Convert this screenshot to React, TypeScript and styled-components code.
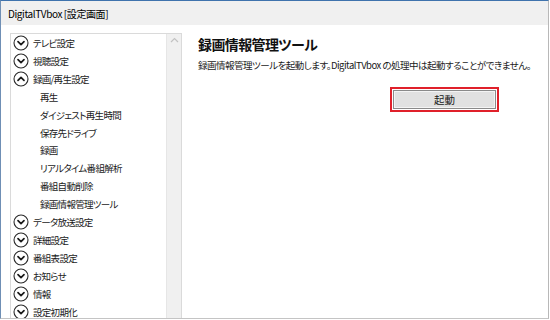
import React from 'react';
import styled, { createGlobalStyle } from 'styled-components';

const GlobalStyle = createGlobalStyle`
  html, body {
    margin: 0;
    padding: 0;
    background: #ffffff;
  }

  body {
    font-family: "Noto Sans CJK JP", "Noto Sans", sans-serif;
    font-feature-settings: "palt";
    color: #1a1a1a;
  }
`;

const Window = styled.div`
  display: flex;
  flex-direction: column;
  width: 549px;
  height: 319px;
  box-sizing: border-box;
  border-top: 1px solid #3f73ad;
  border-left: 1px solid #6f8fb5;
  border-right: 1px solid #b8b8b8;
  border-bottom: 1px solid #c4c4c4;
  overflow: hidden;
  background: #ffffff;
`;

const TitleBar = styled.div`
  display: flex;
  align-items: center;
  height: 24px;
  flex-shrink: 0;
  padding-left: 7px;
  background: #f0f0f0;
  font-size: 10px;
  letter-spacing: -0.4px;
  color: #000000;
`;

const Body = styled.div`
  display: flex;
  flex: 1;
  min-height: 0;
  padding: 8px 0 0 9px;
`;

const Sidebar = styled.div`
  display: flex;
  width: 172px;
  flex-shrink: 0;
  border: 1px solid #dadada;
  border-bottom: none;
  box-sizing: border-box;
`;

const NavList = styled.ul`
  flex: 1;
  list-style: none;
  margin: 0;
  padding: 0;
`;

const NavItem = styled.li<{ $sub?: boolean }>`
  display: flex;
  align-items: center;
  gap: 4px;
  height: 17.93px;
  padding-left: ${({ $sub }) => ($sub ? '29px' : '2px')};
  font-size: 9.5px;
  letter-spacing: -0.7px;
  white-space: nowrap;
`;

const Scrollbar = styled.div`
  display: flex;
  justify-content: center;
  width: 14px;
  padding-top: 3px;
  background: #f0f0f0;
  border-left: 1px solid #e6e6e6;
`;

const Main = styled.div`
  display: flex;
  flex: 1;
  flex-direction: column;
  padding: 2px 0 0 16px;
`;

const Heading = styled.h1`
  margin: 0;
  font-size: 14px;
  font-weight: 700;
  line-height: 18px;
  letter-spacing: -0.6px;
  color: #111111;
`;

const Description = styled.p`
  margin: 5px 0 0;
  font-size: 9.5px;
  line-height: 14px;
  letter-spacing: -0.5px;
  white-space: nowrap;
`;

const ButtonRow = styled.div`
  display: flex;
  justify-content: flex-end;
  margin: 15px 0 0;
  width: 301px;
`;

const Highlight = styled.div`
  padding: 1px;
  border: 2px solid #e0202a;
`;

const Button = styled.button`
  display: block;
  width: 103px;
  height: 19px;
  padding: 0;
  border: 1px solid #8a8a8a;
  box-shadow: inset 0 0 0 1px #f4f4f4;
  background: #e1e1e1;
  font-family: inherit;
  font-size: 10.5px;
  color: #1a1a1a;
`;

const Toggle = ({ open }: { open?: boolean }) => (
  <svg width="16" height="16" viewBox="0 0 16 16">
    <circle cx="8" cy="8" r="7" fill="none" stroke="#2a2a2a" strokeWidth="1.1" />
    <path
      d={open ? 'M5 9.3 L8 6.3 L11 9.3' : 'M5 6.7 L8 9.7 L11 6.7'}
      fill="none"
      stroke="#1a1a1a"
      strokeWidth="1.7"
      strokeLinecap="round"
      strokeLinejoin="round"
    />
  </svg>
);

type Item = { label: string; sub?: boolean; open?: boolean };

const ITEMS: Item[] = [
  { label: 'テレビ設定' },
  { label: '視聴設定' },
  { label: '録画/再生設定', open: true },
  { label: '再生', sub: true },
  { label: 'ダイジェスト再生時間', sub: true },
  { label: '保存先ドライブ', sub: true },
  { label: '録画', sub: true },
  { label: 'リアルタイム番組解析', sub: true },
  { label: '番組自動削除', sub: true },
  { label: '録画情報管理ツール', sub: true },
  { label: 'データ放送設定' },
  { label: '詳細設定' },
  { label: '番組表設定' },
  { label: 'お知らせ' },
  { label: '情報' },
  { label: '設定初期化' },
];

export default function App() {
  return (
    <>
      <GlobalStyle />
      <Window>
        <TitleBar>DigitalTVbox [設定画面]</TitleBar>
        <Body>
          <Sidebar>
            <NavList>
              {ITEMS.map((item) => (
                <NavItem key={item.label} $sub={item.sub}>
                  {!item.sub && <Toggle open={item.open} />}
                  {item.label}
                </NavItem>
              ))}
            </NavList>
            <Scrollbar>
              <svg width="9" height="6" viewBox="0 0 9 6">
                <path d="M1 5 L4.5 1.5 L8 5" fill="none" stroke="#c2c2c2" strokeWidth="1.2" />
              </svg>
            </Scrollbar>
          </Sidebar>
          <Main>
            <Heading>録画情報管理ツール</Heading>
            <Description>
              録画情報管理ツールを起動します。DigitalTVbox の処理中は起動することができません。
            </Description>
            <ButtonRow>
              <Highlight>
                <Button>起動</Button>
              </Highlight>
            </ButtonRow>
          </Main>
        </Body>
      </Window>
    </>
  );
}
